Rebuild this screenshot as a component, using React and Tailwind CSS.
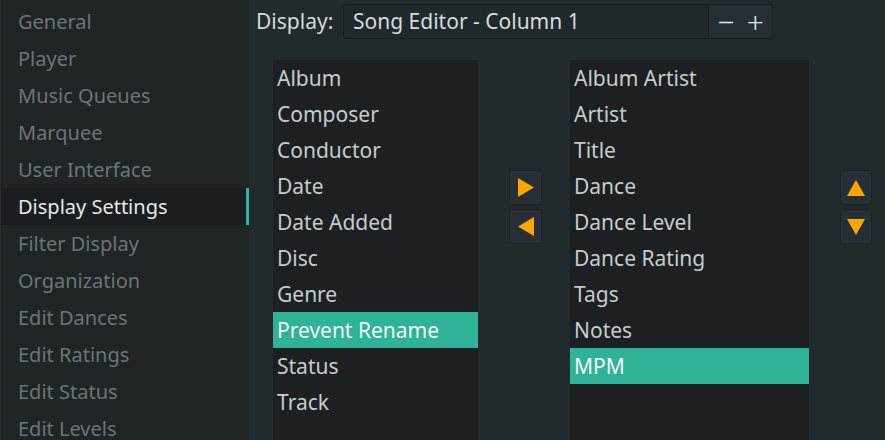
import React from 'react';

const sections = [
  'General',
  'Player',
  'Music Queues',
  'Marquee',
  'User Interface',
  'Display Settings',
  'Filter Display',
  'Organization',
  'Edit Dances',
  'Edit Ratings',
  'Edit Status',
  'Edit Levels',
];

const available = ['Album', 'Composer', 'Conductor', 'Date', 'Date Added', 'Disc', 'Genre', 'Prevent Rename', 'Status', 'Track'];
const shown = ['Album Artist', 'Artist', 'Title', 'Dance', 'Dance Level', 'Dance Rating', 'Tags', 'Notes', 'MPM'];

const Triangle = ({ dir }) => {
  const pts = {
    right: '0,0 16,9.5 0,19',
    left: '16,0 0,9.5 16,19',
    up: '9,0 18,16 0,16',
    down: '0,0 18,0 9,16',
  };
  const size = dir === 'up' || dir === 'down' ? [18, 16] : [16, 19];
  return (
    <svg width={size[0]} height={size[1]} viewBox={`0 0 ${size[0]} ${size[1]}`}>
      <polygon points={pts[dir]} fill="#ffa500" />
    </svg>
  );
};

const ArrowButton = ({ dir, w }) => (
  <button className={`${w} h-[35px] flex items-center justify-center rounded-[3px] bg-[#272e35] border border-[#1d2226]`}>
    <Triangle dir={dir} />
  </button>
);

const FieldList = ({ items, selected, width }) => (
  <div className={`${width} h-[380px] bg-[#1c2023] text-[21px]`}>
    {items.map((item) => (
      <div
        key={item}
        className={`h-[36px] pl-[4px] flex items-center ${item === selected ? 'bg-[#2eb398] text-[#f2f7f5]' : 'text-[#c5cdcc]'}`}
      >
        {item}
      </div>
    ))}
  </div>
);

export default function App() {
  return (
    <div
      className="w-[885px] h-[440px] overflow-hidden flex bg-[#232a2e] text-[20px] leading-[27px]"
      style={{ fontFamily: '"Noto Sans", "Open Sans", sans-serif' }}
    >
      <div className="w-[249px] shrink-0 h-full bg-[#1f2427] border-l border-[#262c30] pt-[3px]">
        {sections.map((s) => (
          <div
            key={s}
            className={`h-[37px] pl-[17px] flex items-center ${
              s === 'Display Settings'
                ? 'bg-[#1a1e21] text-[#e3e9e8] border-r-[3px] border-[#2eb398]'
                : 'text-[#6c7477]'
            }`}
          >
            {s}
          </div>
        ))}
      </div>

      <div className="flex-1 flex flex-col">
        <div className="flex items-center pl-[7px] pt-[4px] h-[39px]">
          <span className="text-[#d3dbdb] w-[87px] text-[21px]">Display:</span>
          <div className="w-[430px] h-[35px] flex rounded-[3px] border border-[#191d20] bg-[#21282c]">
            <div className="flex-1 flex items-center pl-[9px] text-[#d3dbdb] text-[21px]">Song Editor - Column 1</div>
            <div className="w-[64px] flex items-center justify-around bg-[#262e34] border-l border-[#191d20] rounded-r-[3px] text-[#e0e6e6] text-[30px] font-light">
              <span className="pl-[2px] leading-none">−</span>
              <span className="pr-[2px] leading-none">+</span>
            </div>
          </div>
        </div>

        <div className="flex pl-[24px] pt-[21px]">
          <FieldList items={available} selected="Prevent Rename" width="w-[205px]" />
          <div className="ml-[31px] pt-[110px] flex flex-col gap-[4px]">
            <ArrowButton dir="right" w="w-[33px]" />
            <ArrowButton dir="left" w="w-[33px]" />
          </div>
          <div className="ml-[28px]">
            <FieldList items={shown} selected="MPM" width="w-[239px]" />
          </div>
          <div className="ml-[31px] pt-[110px] flex flex-col gap-[4px]">
            <ArrowButton dir="up" w="w-[32px]" />
            <ArrowButton dir="down" w="w-[32px]" />
          </div>
        </div>
      </div>
    </div>
  );
}
